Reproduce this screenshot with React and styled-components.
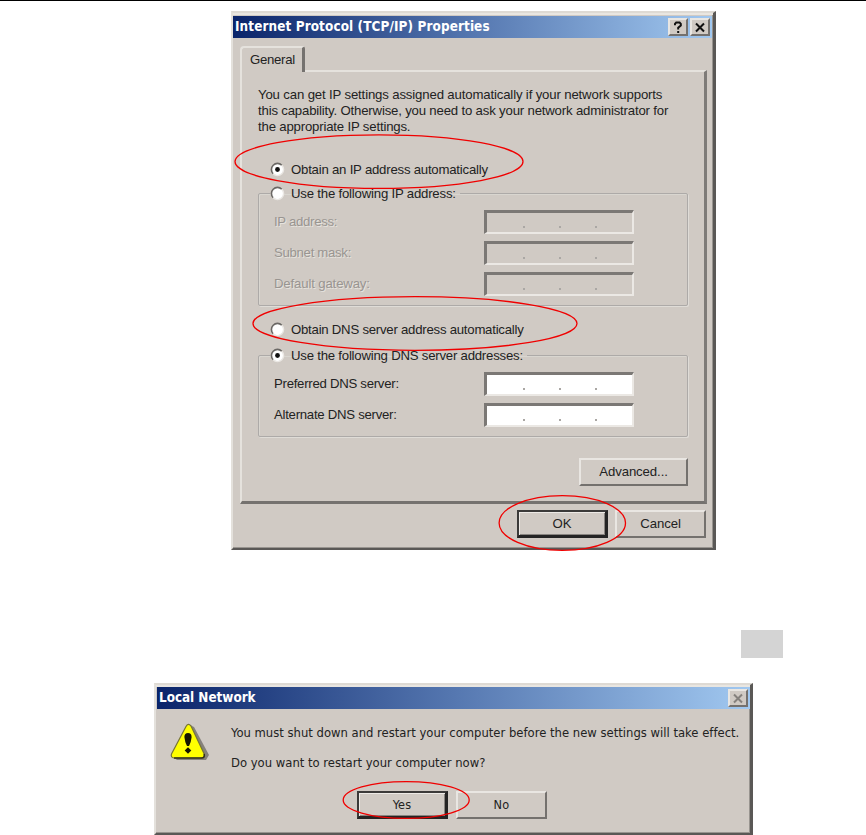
import React from "react";
import styled, { createGlobalStyle, css } from "styled-components";

const FACE = "#d0cac4";

const GlobalStyle = createGlobalStyle`
  * { box-sizing: border-box; }
  html, body { margin: 0; background: #fff; overflow: hidden; }
`;

const Page = styled.main`
  position: relative;
  width: 866px;
  height: 835px;
  overflow: hidden;
  border-top: 1px solid #000;
  background: #fff;
  color: #222;
  font: 13.2px/16px "Liberation Sans", Arial, sans-serif;
  display: flex;
  flex-direction: column;
`;

const Dialog = styled.section`
  width: ${(p) => p.$w}px;
  height: ${(p) => p.$h}px;
  margin: ${(p) => p.$m};
  flex: none;
  background: ${FACE};
  border-style: solid;
  border-width: 2px 3px 2px 2px;
  border-color: #dedad4 #5a5856 #5a5856 #e4e1dc;
  box-shadow: inset 0 2px #e9e6e1, inset -1px -1px #98948f;
  padding: ${(p) => p.$p};
`;

const TitleBar = styled.header`
  height: 22px;
  display: flex;
  align-items: center;
  gap: 2px;
  padding: 0 2px;
  background: linear-gradient(90deg, #0a246a, #5577b0 50%, #a1c8f0);
`;

const Title = styled.h1`
  flex: 1;
  margin: 0;
  color: #fff;
  font: bold 13.4px/20px "DejaVu Sans Condensed", "DejaVu Sans", sans-serif;
  font-stretch: condensed;
  letter-spacing: ${(p) => p.$ls}px;
  white-space: nowrap;
`;

const raised = css`
  border-style: solid;
  border-width: 2px;
  border-color: #e9e6e2 #74716e #74716e #e9e6e2;
`;

const Caption = styled.button`
  ${raised}
  width: 20px;
  height: 18px;
  padding: 0;
  display: flex;
  align-items: center;
  justify-content: center;
  background: ${FACE};
  color: ${(p) => (p.$dim ? "#85817d" : "#111")};
`;

const Text = styled.span`
  white-space: nowrap;
  letter-spacing: ${(p) => p.$ls || 0}px;
`;

const Tab = styled.div`
  position: relative;
  width: 65px;
  height: 26px;
  margin: 8px 0 -2px 7px;
  padding: 4px 0 0 8px;
  background: ${FACE};
  border: solid;
  border-width: 2px 3px 0 2px;
  border-color: #e5e2dd #75726f #75726f #e5e2dd;
  border-radius: 4px 3px 0 0;
`;

const Panel = styled.div`
  width: 467px;
  height: 434px;
  margin-left: 7px;
  padding: 15px 16px 0;
  border-style: solid;
  border-width: 2px 3px 3px 2px;
  border-color: #e5e2dd #7e7b78 #75726f #e5e2dd;
`;

const Intro = styled.p`
  display: flex;
  flex-direction: column;
  margin: 0 0 26px;
`;

const Choice = styled.label`
  display: flex;
  align-items: center;
  gap: 6px;
  height: 17px;
  width: max-content;
  margin-left: ${(p) => (p.$inLegend ? 0 : 12)}px;
`;

const Group = styled.fieldset`
  margin: ${(p) => p.$m};
  padding: 4px 0 0 15px;
  min-width: 0;
  width: 430px;
  height: ${(p) => p.$h}px;
  border: 1px solid #adaaa8;
  border-radius: 2px;
  box-shadow: 1px 1px #dfdcd7, inset 1px 1px #d9d6d0;
`;

const Legend = styled.legend`
  padding: 0 4px 0 0;
  margin-left: -4px;
  height: 17px;
`;

const FieldRow = styled.div`
  display: grid;
  grid-template-columns: 210px 150px;
  align-items: center;
  height: 31px;
  color: ${(p) => (p.$off ? "#999591" : "#222")};
  text-shadow: ${(p) => (p.$off ? "1px 1px #e6e3de" : "none")};
`;

const AddressBox = styled.div`
  height: 24px;
  display: flex;
  padding: 13px 0 0 36px;
  gap: 34px;
  background: ${(p) => (p.$off ? FACE : "#fff")};
  border-style: solid;
  border-width: 3px 2px 2px 3px;
  border-color: #7b7875 #ebe8e4 #ebe8e4 #7b7875;
`;

const Dot = styled.i`
  width: 2px;
  height: 2px;
  background: #aaa7a4;
`;

const PushButton = styled.button`
  ${raised}
  width: ${(p) => p.$w || 91}px;
  height: 28px;
  padding: 0 0 1px;
  background: ${FACE};
  color: #222;
  font: inherit;
  letter-spacing: -0.1px;
  ${(p) => p.$tahoma && css`
    font: 12.6px/16px "DejaVu Sans Condensed", "DejaVu Sans", sans-serif;
    font-stretch: condensed;
    letter-spacing: 0.2px;
  `}
  ${(p) => p.$main && css`
    border-color: #3b3a39 #242424 #242424 #3b3a39;
    border-width: 2px 3px 3px 2px;
    padding: 1px 0 0;
    box-shadow: inset 1px 1px #edeae6, inset -1px -1px #888480;
  `}
`;

const Actions = styled.div`
  display: flex;
  gap: ${(p) => p.$gap || 0}px;
  justify-content: ${(p) => p.$justify || "flex-end"};
  margin: ${(p) => p.$m};
`;

const Swatch = styled.div`
  flex: none;
  width: 42px;
  height: 28px;
  margin: 80px 0 0 741px;
  background: #d4d4d4;
`;

const Message = styled.div`
  display: flex;
  gap: 21px;
  margin: 13px 0 0 13px;
`;

const MessageText = styled.div`
  display: flex;
  flex-direction: column;
  gap: 14px;
  padding-top: 3px;
  font: 12.9px/16px "DejaVu Sans Condensed", "DejaVu Sans", sans-serif;
  font-stretch: condensed;
`;

const Marks = styled.svg`
  position: absolute;
  left: 0;
  top: -1px;
  pointer-events: none;
`;

const RadioIcon = ({ on }) => (
  <svg width="15" height="15" viewBox="0 0 15 15">
    <circle cx="7.5" cy="7.5" r="5.8" fill="#fff" />
    <path d="M3.2 11.8A6 6 0 0 1 11.8 3.2" fill="none" stroke="#6b6865" strokeWidth="1.6" />
    <path d="M3.2 11.8A6 6 0 0 0 11.8 3.2" fill="none" stroke="#ebe8e4" strokeWidth="1.4" />
    {on && <circle cx="7.5" cy="7.5" r="2.4" fill="#111" />}
  </svg>
);

const CloseIcon = () => (
  <svg width="12" height="11" viewBox="0 0 12 11">
    <path d="M2 1.5 10 9.5M10 1.5 2 9.5" stroke="currentColor" strokeWidth="2" />
  </svg>
);

const HelpIcon = () => (
  <svg width="10" height="13" viewBox="0 0 10 13">
    <path d="M2 4.2V2.8L3.2 1.6H6.6L7.8 2.8V4.6L5.2 6.7V8.5M5.2 10V12" fill="none" stroke="currentColor" strokeWidth="2" />
  </svg>
);

const WarningIcon = () => (
  <svg width="40" height="40" viewBox="0 0 40 40">
    <path d="M21 3.5 24 5 39 33 36 38H7L3 35Z" fill="#85817b" />
    <path d="M16 4.5Q18 .5 21 4L34.2 32Q35 36 31.5 36H4Q.5 35.5 1.5 32Z" fill="#ff0" stroke="#777536" strokeWidth="1.2" />
    <path d="M34.2 32Q35 36 31.5 36H4" fill="none" stroke="#34331c" strokeWidth="1.5" />
    <path d="M14.4 15Q14.4 11 18 11T21.6 15Q21.2 20 19 24H17Q14.8 20 14.4 15Z" fill="#151500" />
    <path d="M18 25.2 21.3 28.5 18 31.8 14.7 28.5Z" fill="#151500" />
  </svg>
);

const Address = ({ label, off, ls }) => (
  <FieldRow $off={off}>
    <Text $ls={ls}>{label}</Text>
    <AddressBox $off={off}><Dot /><Dot /><Dot /></AddressBox>
  </FieldRow>
);

export default function App() {
  return (
    <Page>
      <GlobalStyle />
      <Dialog $w={485} $h={539} $m="10px 0 0 231px" $p="3px 1px 0 0">
        <TitleBar>
          <Title $ls={0.12}>Internet Protocol (TCP/IP) Properties</Title>
          <Caption aria-label="Help"><HelpIcon /></Caption>
          <Caption aria-label="Close"><CloseIcon /></Caption>
        </TitleBar>
        <Tab><Text $ls={-0.3}>General</Text></Tab>
        <Panel>
          <Intro>
            <Text $ls={-0.15}>You can get IP settings assigned automatically if your network supports</Text>
            <Text $ls={-0.18}>this capability. Otherwise, you need to ask your network administrator for</Text>
            <Text $ls={-0.18}>the appropriate IP settings.</Text>
          </Intro>
          <Choice><RadioIcon on /><Text $ls={-0.22}>Obtain an IP address automatically</Text></Choice>
          <Group $m="7px 0 15px" $h={121}>
            <Legend><Choice $inLegend><RadioIcon /><Text $ls={-0.2}>Use the following IP address:</Text></Choice></Legend>
            <Address off label="IP address:" ls={-0.3} />
            <Address off label="Subnet mask:" ls={-0.3} />
            <Address off label="Default gateway:" ls={-0.15} />
          </Group>
          <Choice><RadioIcon /><Text $ls={-0.24}>Obtain DNS server address automatically</Text></Choice>
          <Group $m="9px 0 0" $h={90}>
            <Legend><Choice $inLegend><RadioIcon on /><Text $ls={-0.22}>Use the following DNS server addresses:</Text></Choice></Legend>
            <Address label="Preferred DNS server:" ls={-0.27} />
            <Address label="Alternate DNS server:" ls={-0.27} />
          </Group>
          <Actions $m="21px 0 0"><PushButton $w={109}>Advanced...</PushButton></Actions>
        </Panel>
        <Actions $gap={7} $m="6px 6px 0 0">
          <PushButton $main>OK</PushButton>
          <PushButton>Cancel</PushButton>
        </Actions>
      </Dialog>
      <Swatch />
      <Dialog $w={599} $h={152} $m="25px 0 0 154px" $p="2px 0 0 1px">
        <TitleBar>
          <Title $ls={-0.03}>Local Network</Title>
          <Caption aria-label="Close" $dim><CloseIcon /></Caption>
        </TitleBar>
        <Message>
          <WarningIcon />
          <MessageText>
            <Text $ls={0.01}>You must shut down and restart your computer before the new settings will take effect.</Text>
            <Text $ls={0.01}>Do you want to restart your computer now?</Text>
          </MessageText>
        </Message>
        <Actions $gap={8} $justify="flex-start" $m="20px 0 0 200px">
          <PushButton $main $tahoma>Yes</PushButton>
          <PushButton $tahoma>No</PushButton>
        </Actions>
      </Dialog>
      <Marks width="866" height="835" fill="none" stroke="#f00000" strokeWidth="1.3">
        <ellipse cx="379" cy="161.6" rx="144" ry="26.8" />
        <ellipse cx="415" cy="323.5" rx="162" ry="26.8" />
        <ellipse cx="562.3" cy="523" rx="63.2" ry="27.3" />
        <ellipse cx="406.2" cy="800" rx="63" ry="18.4" />
      </Marks>
    </Page>
  );
}
